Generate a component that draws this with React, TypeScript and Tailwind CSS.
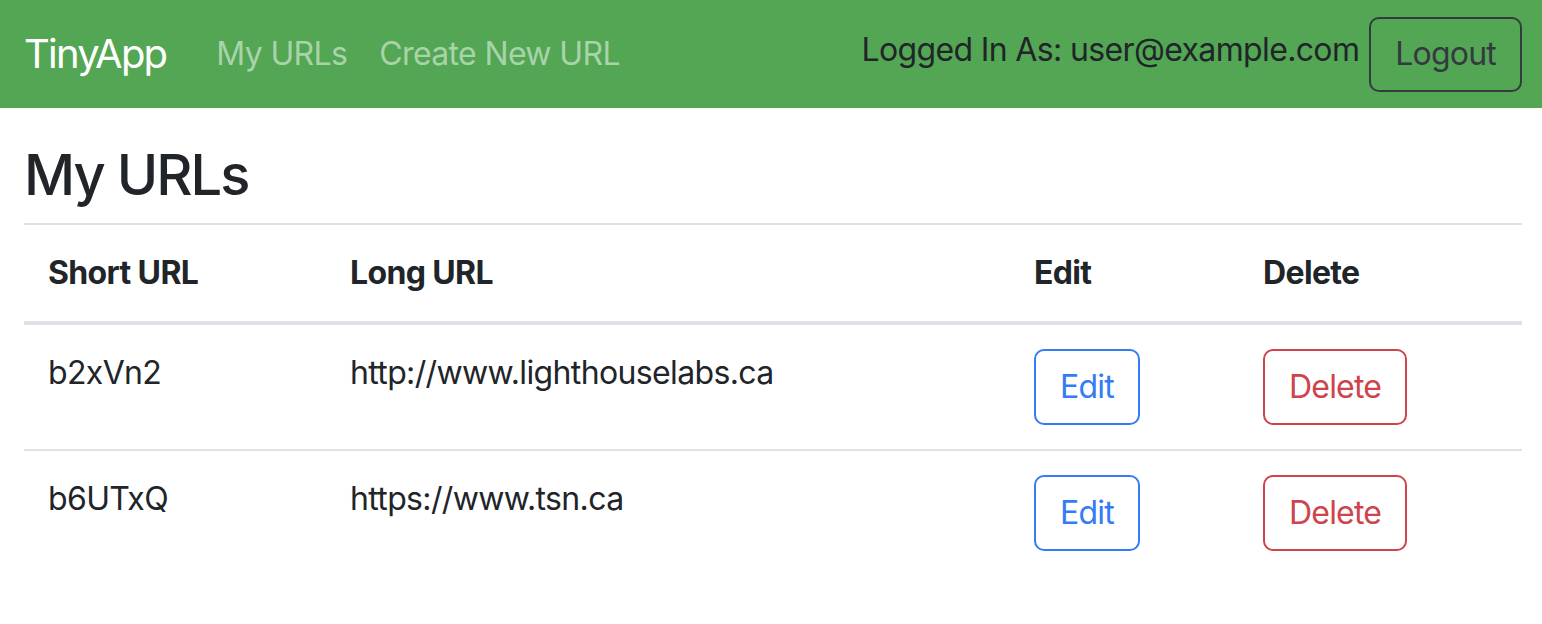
import React from "react";

const rows = [
  { short: "b2xVn2", long: "http://www.lighthouselabs.ca" },
  { short: "b6UTxQ", long: "https://www.tsn.ca" },
];

export default function App() {
  return (
    <div
      className="min-h-screen bg-white text-[#212529] tracking-[-0.04em]"
      style={{ fontFamily: "Inter, 'Noto Sans', sans-serif" }}
    >
      <nav className="flex h-[108px] items-center bg-[#53a653] pl-6 pr-[20px]">
        <span className="mr-[50px] text-[40px] leading-[60px] tracking-[-0.045em] text-white">TinyApp</span>
        <div className="flex gap-[32px] text-[32px] leading-[48px] text-[#a9d3a9]">
          <span>My URLs</span>
          <span>Create New URL</span>
        </div>
        <div className="ml-auto flex items-center gap-[10px]">
          <span className="-mt-[8px] text-[32px] leading-[48px] text-[#212529]">
            Logged In As: user@example.com
          </span>
          <button className="h-[75px] rounded-[10px] border-2 border-[#343a40] px-[24px] text-[32px] leading-[48px] tracking-[-0.025em] text-[#343a40]">
            Logout
          </button>
        </div>
      </nav>
      <main className="pl-6 pr-[20px]">
        <h2 className="pt-[32px] pb-[13px] text-[56px] font-medium leading-[70px] tracking-[-0.035em]">My URLs</h2>
        <table className="w-full border-t-2 border-[#dee2e6] text-[32px] leading-[48px]">
          <thead>
            <tr className="border-b-4 border-[#dee2e6]">
              <th className="w-[302px] p-6 text-left font-bold">Short URL</th>
              <th className="w-[684px] p-6 text-left font-bold">Long URL</th>
              <th className="w-[229px] p-6 text-left font-bold">Edit</th>
              <th className="p-6 text-left font-bold">Delete</th>
            </tr>
          </thead>
          <tbody>
            {rows.map((r, i) => (
              <tr key={r.short} className={i === 0 ? "border-b-2 border-[#dee2e6]" : ""}>
                <td className="p-6 align-top">{r.short}</td>
                <td className="p-6 align-top">{r.long}</td>
                <td className="p-6 align-top">
                  <button className="rounded-[10px] border-2 border-[#347cf4] px-[24px] py-[12px] text-[32px] leading-[48px] tracking-[-0.025em] text-[#347cf4]">
                    Edit
                  </button>
                </td>
                <td className="p-6 align-top">
                  <button className="rounded-[10px] border-2 border-[#cf434b] px-[24px] py-[12px] text-[32px] leading-[48px] tracking-[-0.025em] text-[#cf434b]">
                    Delete
                  </button>
                </td>
              </tr>
            ))}
          </tbody>
        </table>
      </main>
    </div>
  );
}
